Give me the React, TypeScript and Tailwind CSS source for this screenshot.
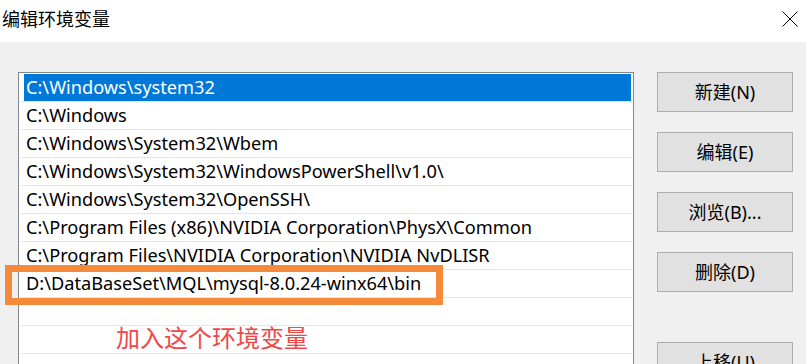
import React from 'react';

const paths = [
  'C:\\Windows\\system32',
  'C:\\Windows',
  'C:\\Windows\\System32\\Wbem',
  'C:\\Windows\\System32\\WindowsPowerShell\\v1.0\\',
  'C:\\Windows\\System32\\OpenSSH\\',
  'C:\\Program Files (x86)\\NVIDIA Corporation\\PhysX\\Common',
  'C:\\Program Files\\NVIDIA Corporation\\NVIDIA NvDLISR',
  'D:\\DataBaseSet\\MQL\\mysql-8.0.24-winx64\\bin',
  '',
  '',
  '',
];

const buttons = [
  { label: '新建(N)', gap: 'mt-0' },
  { label: '编辑(E)', gap: 'mt-[20px]' },
  { label: '浏览(B)...', gap: 'mt-[20px]' },
  { label: '删除(D)', gap: 'mt-[20px]' },
  { label: '上移(U)', gap: 'mt-[50px]' },
];

export default function App() {
  return (
    <div
      className="relative w-[806px] h-[364px] overflow-hidden bg-[#f0f0f0] flex flex-col"
      style={{ fontFamily: '"Noto Sans", "Noto Sans CJK SC", sans-serif' }}
    >
      {/* Title bar */}
      <div className="h-[42px] bg-white flex items-center justify-between shrink-0">
        <div className="pl-[2px] text-[18px] text-black leading-none -mt-[4px]">
          编辑环境变量
        </div>
        <svg
          className="w-[16px] h-[16px] mr-[8px] -mt-[4px]"
          viewBox="0 0 16 16"
          fill="none"
          stroke="#000"
          strokeWidth={1}
        >
          <path d="M0.5 0.5L15.5 15.5M15.5 0.5L0.5 15.5" />
        </svg>
      </div>

      {/* Body */}
      <div className="flex flex-1 pt-[30px] pl-[18px]">
        <div className="w-[616px] border border-[#828790] bg-white pt-[1px] px-[1px] self-start">
          {paths.map((p, i) => (
            <div key={i} className="h-[28px] border-b border-[#e6e6e6]">
              <div
                className={`h-[27px] ml-[4px] mr-[1px] pl-[2px] flex items-center text-[18.2px] whitespace-nowrap ${
                  i === 0 ? 'bg-[#0078d7] text-white' : 'text-black'
                }`}
              >
                {p}
              </div>
            </div>
          ))}
        </div>

        <div className="ml-[23px] flex flex-col">
          {buttons.map((b) => (
            <button
              key={b.label}
              className={`${b.gap} w-[136px] h-[40px] bg-[#e1e1e1] border border-[#adadad] text-[18px] text-black flex items-center justify-center`}
            >
              {b.label}
            </button>
          ))}
        </div>
      </div>

      {/* Annotation */}
      <div className="absolute left-[5px] top-[265px] w-[438px] h-[40px] border-[7px] border-[#f58a3b]" />
      <div className="absolute left-[116px] top-[326px] text-[24px] leading-none text-[#f04848]">
        加入这个环境变量
      </div>
    </div>
  );
}
